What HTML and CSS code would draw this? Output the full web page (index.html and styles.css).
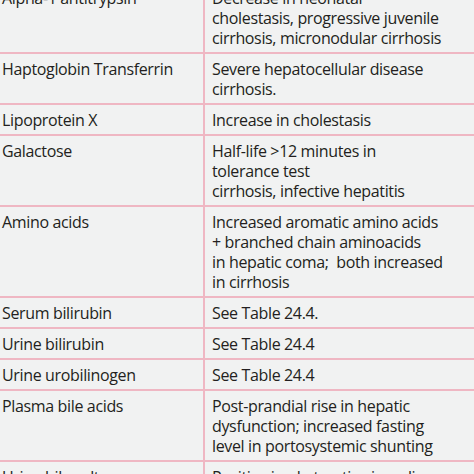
FILE: index.html
```html
<!DOCTYPE html>
<html>
<head>
<meta charset="utf-8">
<link rel="stylesheet" href="styles.css">
</head>
<body>
<table class="lab">
  <colgroup><col class="c-test"><col class="c-note"></colgroup>
  <tr><td>Alpha-1 antitrypsin</td><td>Decrease in neonatal<br>cholestasis, progressive juvenile<br>cirrhosis, micronodular cirrhosis</td></tr>
  <tr><td>Haptoglobin Transferrin</td><td>Severe hepatocellular disease<br>cirrhosis.</td></tr>
  <tr><td>Lipoprotein X</td><td>Increase in cholestasis</td></tr>
  <tr><td>Galactose</td><td>Half-life &gt;12 minutes in<br>tolerance test<br>cirrhosis, infective hepatitis</td></tr>
  <tr><td>Amino acids</td><td>Increased aromatic amino acids<br>+ branched chain aminoacids<br>in hepatic coma;&nbsp; both increased<br>in cirrhosis</td></tr>
  <tr><td>Serum bilirubin</td><td>See Table 24.4.</td></tr>
  <tr><td>Urine bilirubin</td><td>See Table 24.4</td></tr>
  <tr><td>Urine urobilinogen</td><td>See Table 24.4</td></tr>
  <tr><td>Plasma bile acids</td><td>Post-prandial rise in hepatic<br>dysfunction; increased fasting<br>level in portosystemic shunting</td></tr>
  <tr><td>Urine bile salts</td><td>Positive in obstructive jaundice</td></tr>
</table>
</body>
</html>
```
FILE: styles.css
```css
html, body {
  margin: 0;
  padding: 0;
  background: #f1f2f2;
  overflow: hidden;
}
.lab {
  border-collapse: collapse;
  table-layout: fixed;
  width: 560px;
  margin-top: -19px;
  margin-left: -7px;
  font-family: "Open Sans", "Noto Sans", sans-serif;
  font-size: 16px;
  letter-spacing: -0.35px;
  line-height: 20px;
  color: #231f20;
  background: #f1f2f2;
}
.c-test {
  width: 210px;
}
.c-note {
  width: 350px;
}
.lab td {
  border: 2px solid #efb7c3;
  padding: 5px 7px 4px 7px;
  vertical-align: top;
  white-space: nowrap;
}
```
